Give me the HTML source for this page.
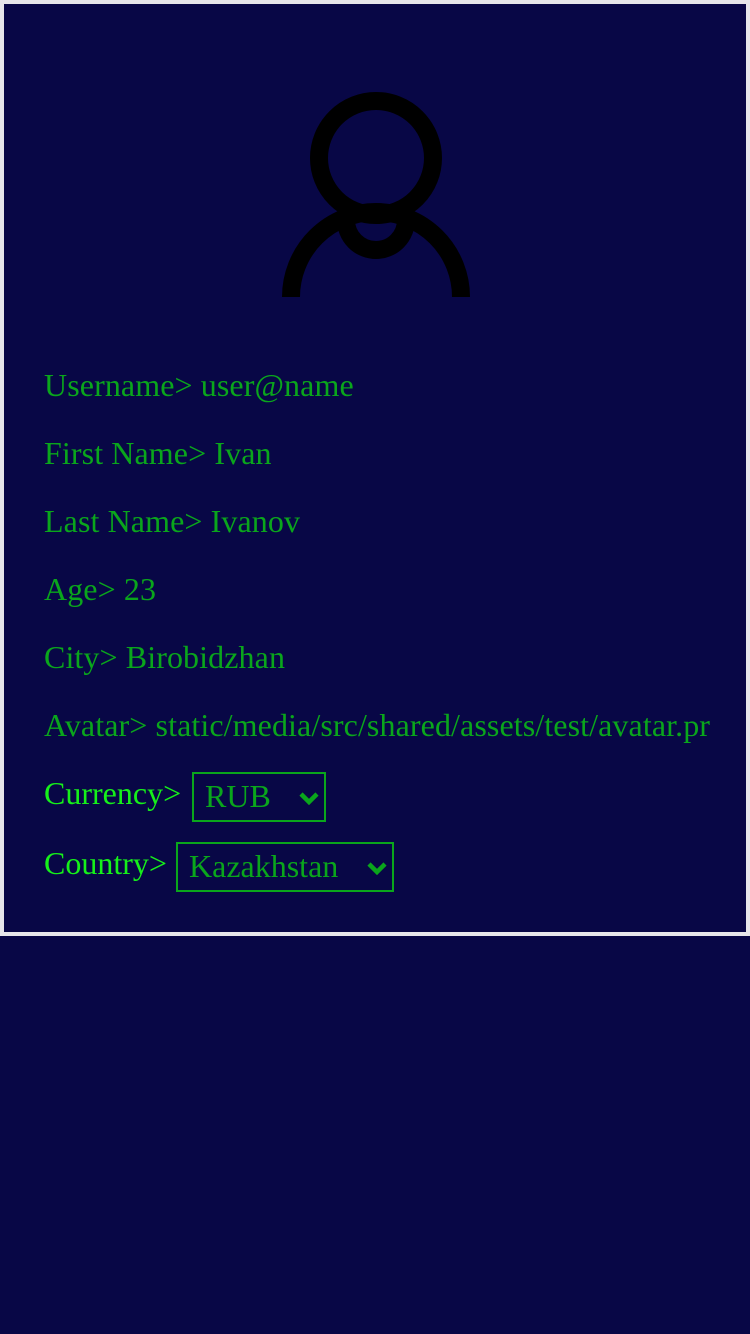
<!DOCTYPE html>
<html><head><meta charset="utf-8"><style>
html,body{margin:0;padding:0;background:#080746;width:750px;height:1334px;overflow:hidden;font-family:"Liberation Serif",serif;}
.frame{position:absolute;left:0;top:0;width:742px;height:928px;border:4px solid #e6e6ea;background:#080746;}
.t{position:absolute;left:44px;font-size:32px;color:#0aa61c;line-height:1;white-space:nowrap;letter-spacing:0.1px;}
.l{position:absolute;left:44px;font-size:32px;color:#16f01a;line-height:1;white-space:nowrap;}
.sel{position:absolute;border:2px solid #0aa61c;box-sizing:border-box;color:#0aa61c;font-size:32px;line-height:1;}
.sel span{position:absolute;left:11px;top:6px;}
.sel svg{position:absolute;top:17px;}
</style></head><body>
<div class="frame"></div>
<svg style="position:absolute;left:0;top:0" width="750" height="320">
<g fill="none" stroke="#000" stroke-width="18">
<circle cx="376" cy="158" r="57"/>
<path d="M291 297 A85 85 0 0 1 461 297"/>
<path d="M346 220 A30 30 0 0 0 406 220"/>
</g></svg>
<div class="t" style="top:369px">Username&gt; user@name</div>
<div class="t" style="top:437px">First Name&gt; Ivan</div>
<div class="t" style="top:505px">Last Name&gt; Ivanov</div>
<div class="t" style="top:573px">Age&gt; 23</div>
<div class="t" style="top:641px">City&gt; Birobidzhan</div>
<div class="t" style="top:709px">Avatar&gt; static/media/src/shared/assets/test/avatar.pr</div>
<div class="l" style="top:777px">Currency&gt;</div>
<div class="sel" style="left:192px;top:772px;width:134px;height:50px"><span>RUB</span><svg style="left:104px" width="22" height="14" viewBox="0 0 22 14"><path d="M3 3 L11 11 L19 3" fill="none" stroke="#0aa61c" stroke-width="4.5"/></svg></div>
<div class="l" style="top:847px">Country&gt;</div>
<div class="sel" style="left:176px;top:842px;width:218px;height:50px"><span>Kazakhstan</span><svg style="left:188px" width="22" height="14" viewBox="0 0 22 14"><path d="M3 3 L11 11 L19 3" fill="none" stroke="#0aa61c" stroke-width="4.5"/></svg></div>
</body></html>
